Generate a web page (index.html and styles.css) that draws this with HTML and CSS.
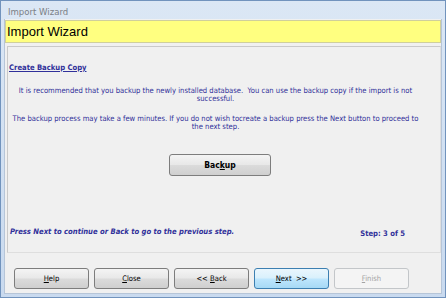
FILE: index.html
```html
<!DOCTYPE html>
<html>
<head>
    <title>Import Wizard</title>
    <link rel="stylesheet" href="styles.css">
</head>
<body>
    <div class="window">
        <div class="titlebar">Import Wizard</div>
        <div class="client">
            <div class="banner">Import Wizard</div>

            <div class="panel">
                <div class="heading">Create Backup Copy</div>
                <p class="info">It is recommended that you backup the newly installed database.&nbsp; You can use the backup copy if the import is not successful.</p>
                <p class="info">The backup process may take a few minutes. If you do not wish tocreate a backup press the Next button to proceed to the next step.</p>

                <div class="backup-row">
                    <button class="btn btn-backup">Bac<u>k</u>up</button>
                </div>

                <div class="status">
                    <span class="hint">Press Next to continue or Back to go to the previous step.</span>
                    <span class="step">Step: 3 of 5</span>
                </div>
            </div>

            <div class="buttons">
                <button class="btn"><u>H</u>elp</button>
                <button class="btn"><u>C</u>lose</button>
                <button class="btn">&lt;&lt; <u>B</u>ack</button>
                <button class="btn btn-default"><u>N</u>ext &nbsp;&gt;&gt;</button>
                <button class="btn btn-disabled" disabled><u>F</u>inish</button>
            </div>
        </div>
    </div>
</body>
</html>
```

FILE: styles.css
```css
body {
    margin: 0;
    font-family: "DejaVu Sans Condensed", "DejaVu Sans", sans-serif;
}
.window {
    width: 446px;
    height: 298px;
    box-sizing: border-box;
    border: 1px solid #7193bd;
    background: linear-gradient(#dbe7f5, #c9daef);
    padding: 0 3px 3px 3px;
    display: flex;
    flex-direction: column;
}
.titlebar {
    height: 18px;
    line-height: 21px;
    padding-left: 4px;
    font-family: "DejaVu Sans Condensed", "DejaVu Sans", sans-serif;
    font-size: 9.5px;
    color: #7a7f86;
}
.client {
    flex: 1;
    background: #f0f0f0;
    border: 1px solid #b6c5d8;
    border-top: none;
    display: flex;
    flex-direction: column;
}
.banner {
    margin-top: 1px;
    height: 21px;
    line-height: 21px;
    background: #ffff80;
    border: 1px solid #cfcf9c;
    padding-left: 1px;
    font-family: "Liberation Sans", sans-serif;
    font-size: 13px;
    color: #000;
}
.panel {
    margin: 3px 0 0 2px;
    height: 205px;
    border: 1px solid #c9c9c9;
    border-right-color: #dedede;
    border-bottom-color: #dedede;
    display: flex;
    flex-direction: column;
    color: #30309a;
    font-size: 7.6px;
}
.heading {
    margin: 17px 0 0 1px;
    line-height: 8px;
    font-weight: bold;
    text-decoration: underline;
}
.info {
    margin: 15px 19px 0 2px;
    text-align: center;
    line-height: 8px;
}
.info + .info {
    margin-top: 12px;
}
.backup-row {
    display: flex;
    justify-content: center;
    margin-top: 23px;
    padding-right: 8px;
}
.btn {
    width: 75px;
    height: 21px;
    padding: 0;
    border: 1px solid #7d7d7d;
    border-radius: 3px;
    background: linear-gradient(#f4f4f4 0%, #e8e8e8 48%, #dbdbdb 52%, #cfcfcf 100%);
    font-family: "DejaVu Sans Condensed", "DejaVu Sans", sans-serif;
    font-size: 7.6px;
    color: #000;
}
.btn-backup {
    width: 102px;
    height: 22px;
    font-weight: bold;
    font-size: 8.5px;
}
.status {
    margin-top: auto;
    height: 24px;
    line-height: 8px;
    display: flex;
    justify-content: space-between;
    padding: 0 35px 0 2px;
    font-weight: bold;
}
.hint {
    font-style: italic;
}
.step {
    padding-top: 2px;
}
.buttons {
    display: flex;
    gap: 5px;
    margin: 15px 0 0 9px;
}
.btn-default {
    border-color: #3c7fb1;
    background: linear-gradient(#eaf6fd 0%, #d9f0fc 48%, #bee6fd 52%, #a7d9f5 100%);
}
.btn-disabled {
    border-color: #c3c6c9;
    background: #f4f4f4;
    color: #a3a3a3;
}
```
